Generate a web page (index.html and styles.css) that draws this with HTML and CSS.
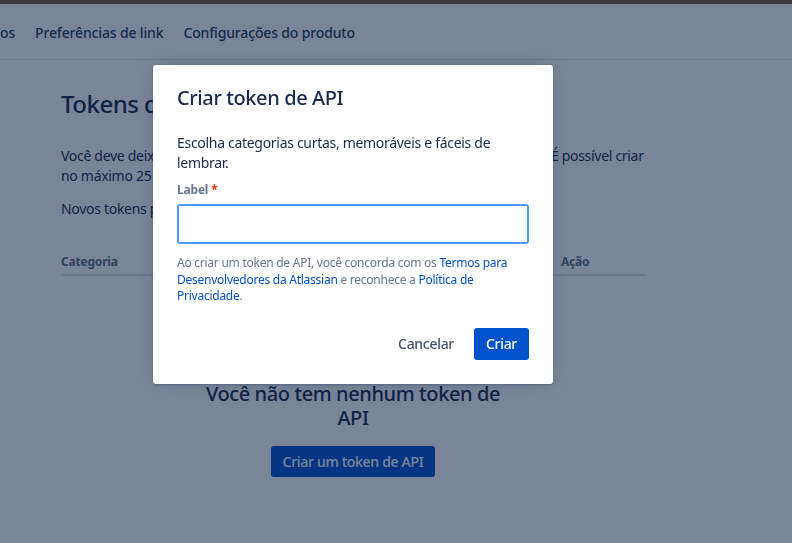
FILE: index.html
```html
<!DOCTYPE html>
<html lang="pt-BR">
<head>
<meta charset="utf-8">
<title>Tokens de API</title>
<link rel="stylesheet" href="styles.css">
</head>
<body>
<div class="chrome"></div>
<nav class="nav">
  <a class="nav-item">os</a>
  <a class="nav-item">Preferências de link</a>
  <a class="nav-item">Configurações do produto</a>
</nav>
<main class="main">
  <h1 class="page-title">Tokens de API</h1>
  <p class="intro"><span class="nowrap">Você deve deixar os seus tokens de API em segurança, como qualquer senha. É possível criar</span><br>no máximo 25 tokens de API.</p>
  <p class="intro">Novos tokens por padrão expiram em um ano.</p>
  <div class="table-head">
    <span class="th th-cat">Categoria</span>
    <span class="th th-act">Ação</span>
  </div>
  <div class="empty">
    <h2 class="empty-title">Você não tem nenhum token de API</h2>
    <button class="btn btn-primary btn-empty">Criar um token de API</button>
  </div>
</main>

<div class="overlay"></div>
<section class="modal" role="dialog">
  <h2 class="modal-title">Criar token de API</h2>
  <p class="modal-text">Escolha categorias curtas, memoráveis e fáceis de lembrar.</p>
  <label class="field-label">Label <span class="req">*</span></label>
  <input class="field-input" type="text">
  <p class="helper">Ao criar um token de API, você concorda com os <a class="link">Termos para Desenvolvedores da Atlassian</a> e reconhece a <a class="link">Política de Privacidade</a>.</p>
  <div class="modal-footer">
    <button class="btn btn-subtle">Cancelar</button>
    <button class="btn btn-primary">Criar</button>
  </div>
</section>
</body>
</html>
```

FILE: styles.css
```css
* { box-sizing: border-box; }
html, body { margin: 0; padding: 0; }
body {
  font-family: "Noto Sans", "Open Sans", sans-serif;
  color: #172b4d;
  background: #fff;
  width: 792px;
  height: 543px;
  overflow: hidden;
  letter-spacing: -0.3px;
}
.chrome { height: 4px; background: #3b3b3b; position: relative; z-index: 3; }
.nav {
  height: 56px;
  display: flex;
  align-items: center;
  gap: 20px;
  padding-top: 2px;
  border-bottom: 1px solid #dfe1e6;
  font-size: 14px;
  font-weight: 500;
  letter-spacing: -0.15px;
}
.nav-item { color: #253858; }
.main { padding: 0 147px 0 61px; }
.page-title { margin: 28px 0 0; font-size: 24px; font-weight: 500; line-height: 32px; letter-spacing: -0.5px; }
.intro { margin: 26px 0 0; font-size: 14px; line-height: 20px; }
.intro + .intro { margin-top: 13px; }
.nowrap { white-space: nowrap; }
.table-head {
  margin-top: 34px;
  display: flex;
  border-bottom: 2px solid #dfe1e6;
  padding-bottom: 4px;
  font-size: 12px;
  font-weight: 700;
  color: #5e6c84;
  letter-spacing: -0.2px;
}
.th-cat { flex: 1; }
.th-act { width: 84px; }
.empty { text-align: center; margin-top: 106px; }
.empty-title {
  width: 310px; margin: 0 auto;
  font-size: 20px; line-height: 24px; font-weight: 500;
  letter-spacing: -0.4px;
}
.btn {
  font-family: inherit;
  font-size: 14px;
  font-weight: 500;
  letter-spacing: -0.3px;
  height: 32px;
  padding: 0 12px;
  border: 0;
  border-radius: 3px;
  cursor: pointer;
}
.btn-primary { background: #0052cc; color: #fff; }
.btn-subtle { background: transparent; color: #42526e; }
.btn-empty { margin-top: 16px; height: 31px; }

.overlay {
  position: fixed; left: 0; right: 0; top: 4px; bottom: 0;
  background: rgba(9, 30, 66, 0.54);
  z-index: 1;
}
.modal {
  position: fixed;
  left: 153px; top: 65px;
  width: 400px;
  padding: 21px 24px 24px;
  background: #fff;
  border-radius: 3px;
  box-shadow: 0 0 0 1px rgba(9,30,66,0.08), 0 2px 1px rgba(9,30,66,0.08), 0 0 20px -6px rgba(9,30,66,0.31);
  z-index: 2;
  display: flex;
  flex-direction: column;
}
.modal-title { margin: 0; font-size: 20px; line-height: 24px; font-weight: 500; letter-spacing: -0.4px; }
.modal-text { margin: 23px 0 0; font-size: 14px; line-height: 20px; }
.field-label { margin-top: 9px; font-size: 12px; line-height: 16px; font-weight: 700; color: #6b778c; letter-spacing: -0.2px; }
.req { color: #de350b; }
.field-input {
  margin-top: 6px;
  height: 40px;
  border: 2px solid #4c9aff;
  border-radius: 3px;
  outline: none;
  background: #fff;
}
.helper { margin: 11px 0 0; font-size: 12px; line-height: 16.5px; color: #6b778c; letter-spacing: -0.25px; }
.link { color: #0052cc; }
.modal-footer { margin-top: 23px; display: flex; justify-content: flex-end; gap: 8px; }
```
